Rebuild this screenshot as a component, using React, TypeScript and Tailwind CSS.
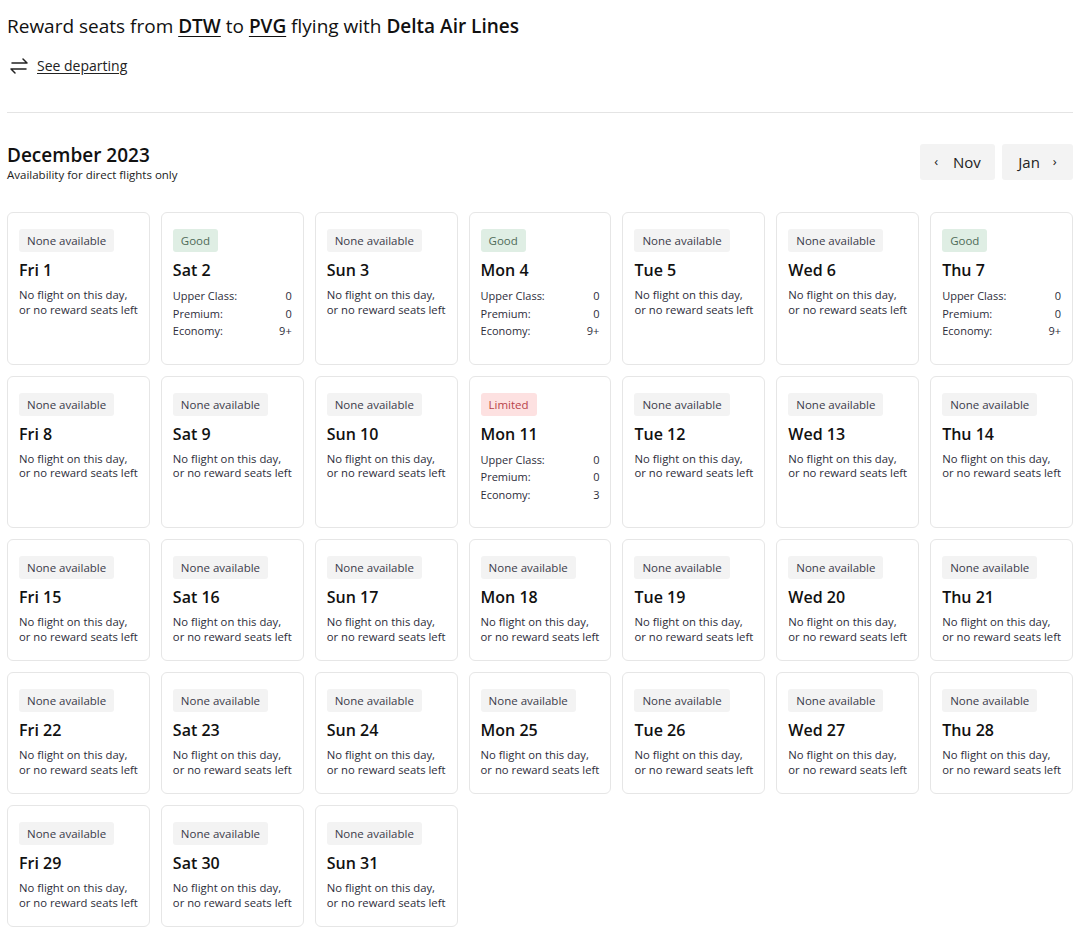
import React from "react";

type Status = "none" | "good" | "limited";
type Day = { label: string; status: Status; seats?: [string, string, string] };

const names = ["Fri", "Sat", "Sun", "Mon", "Tue", "Wed", "Thu"];
const special: Record<number, { status: Status; seats: [string, string, string] }> = {
  2: { status: "good", seats: ["0", "0", "9+"] },
  4: { status: "good", seats: ["0", "0", "9+"] },
  7: { status: "good", seats: ["0", "0", "9+"] },
  11: { status: "limited", seats: ["0", "0", "3"] },
};

const days: Day[] = Array.from({ length: 31 }, (_, i) => {
  const d = i + 1;
  const s = special[d];
  return { label: `${names[i % 7]} ${d}`, status: s ? s.status : "none", seats: s?.seats };
});

function Badge({ status }: { status: Status }) {
  if (status === "good")
    return <span className="inline-block rounded-[3px] bg-[#dfeee4] px-[8px] py-[4px] text-[11.5px] leading-[15px] text-[#4f6b58]">Good</span>;
  if (status === "limited")
    return <span className="inline-block rounded-[3px] bg-[#fde1e1] px-[8px] py-[4px] text-[11.5px] leading-[15px] text-[#b8434a]">Limited</span>;
  return <span className="inline-block rounded-[3px] bg-[#f3f3f3] px-[8px] py-[4px] text-[11.5px] leading-[15px] text-[#3b3b4a]">None available</span>;
}

function Card({ day }: { day: Day }) {
  return (
    <div className="rounded-[6px] border border-[#e6e6e6] bg-white px-[11px] pt-[14px] pb-[16px]">
      <Badge status={day.status} />
      <div className="mt-[6px] text-[16px] font-semibold leading-[24px] text-[#111]">{day.label}</div>
      {day.seats ? (
        <div className="mt-[5px] mb-[8px] text-[11px] leading-[17.5px] text-[#2d2d3a]">
          <div className="flex justify-between"><span>Upper Class:</span><span>{day.seats[0]}</span></div>
          <div className="flex justify-between"><span>Premium:</span><span>{day.seats[1]}</span></div>
          <div className="flex justify-between"><span>Economy:</span><span>{day.seats[2]}</span></div>
        </div>
      ) : (
        <div className="mt-[6px] text-[11.3px] leading-[14.5px] text-[#2d2d3a]">
          No flight on this day,
          <br />
          or no reward seats left
        </div>
      )}
    </div>
  );
}

export default function App() {
  return (
    <div className="min-h-[936px] bg-white px-[7px] pt-[14px] pb-[10px] text-[#111]" style={{ fontFamily: '"Open Sans", "Noto Sans", sans-serif' }}>
      <h1 className="text-[19px] leading-[24px] text-[#111]">
        Reward seats from <span className="font-semibold underline underline-offset-[3px]">DTW</span> to{" "}
        <span className="font-semibold underline underline-offset-[3px]">PVG</span> flying with{" "}
        <span className="font-semibold">Delta Air Lines</span>
      </h1>
      <div className="mt-[18px] flex items-center gap-[8px]">
        <svg width="21" height="18" viewBox="0 0 21 18" fill="none" stroke="#222" strokeWidth="1.5" strokeLinecap="round" strokeLinejoin="round" className="ml-[1px]">
          <path d="M4 6h15M15 2l4 4" />
          <path d="M18 12H3M7 16l-4-4" />
        </svg>
        <a className="text-[14px] leading-[20px] text-[#222] underline underline-offset-[2px]">See departing</a>
      </div>
      <div className="mt-[36px] h-px bg-[#e4e4e4]" />
      <div className="mt-[31px] flex items-start justify-between">
        <div>
          <div className="text-[19px] font-semibold leading-[22px]">December 2023</div>
          <div className="mt-[1px] text-[11.5px] leading-[15px] text-[#222]">Availability for direct flights only</div>
        </div>
        <div className="flex gap-[7px]">
          <button className="flex h-[36px] w-[75px] items-center justify-center gap-[15px] rounded-[3px] bg-[#f3f3f3] text-[15px] text-[#222]">
            <span className="text-[13px]">‹</span>Nov
          </button>
          <button className="flex h-[36px] w-[71px] items-center justify-center gap-[13px] rounded-[3px] bg-[#f3f3f3] text-[15px] text-[#222]">
            Jan<span className="text-[13px]">›</span>
          </button>
        </div>
      </div>
      <div className="mt-[30px] grid grid-cols-7 gap-[11px]">
        {days.map((d) => (
          <Card key={d.label} day={d} />
        ))}
      </div>
    </div>
  );
}
